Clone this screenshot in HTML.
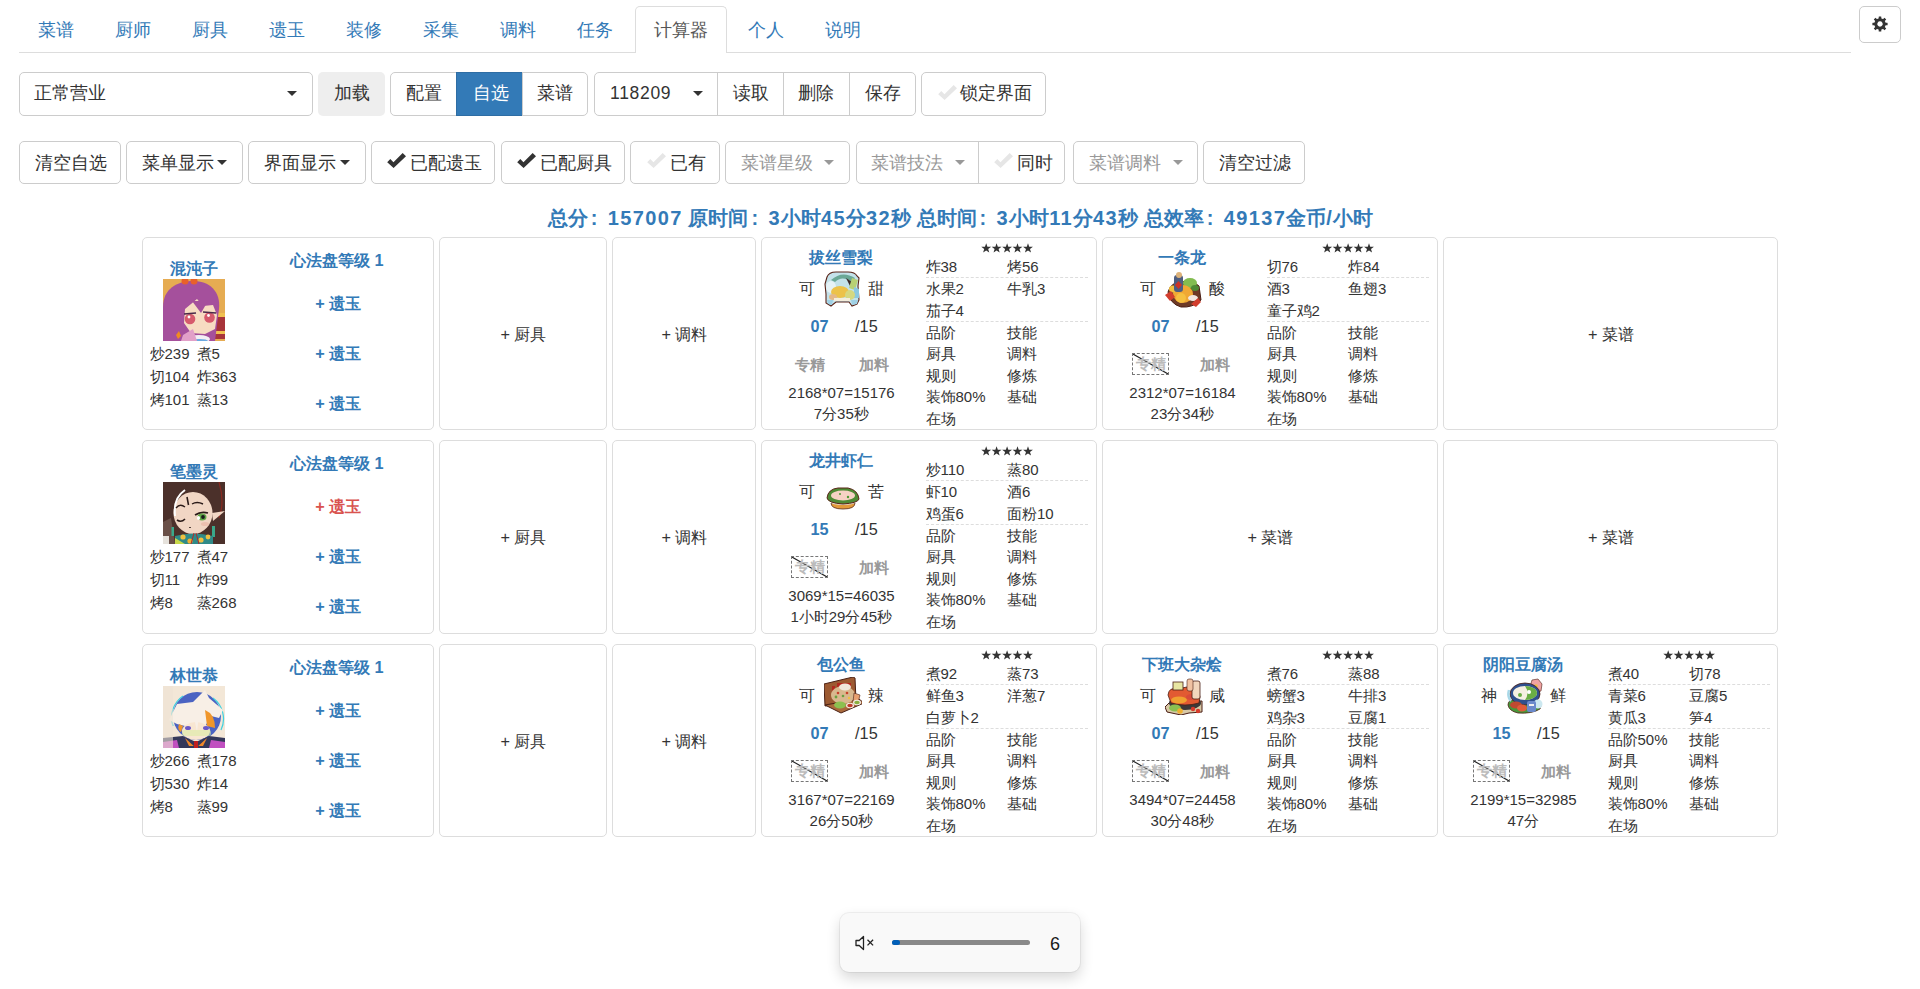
<!DOCTYPE html>
<html><head><meta charset="utf-8"><title>calc</title><style>
*{box-sizing:border-box}
html,body{margin:0;padding:0}
body{width:1920px;height:989px;overflow:hidden;position:relative;background:#fff;color:#333;font-family:"Liberation Sans",sans-serif;font-size:15px;line-height:20px}
.a{position:absolute;white-space:nowrap}
.t{position:absolute;white-space:nowrap;line-height:20px}
.bx{position:absolute;border:1px solid #ccc;border-radius:5px;background:#fff}
.nav{font-size:17.5px;color:#337ab7}
.btn{font-size:17.5px;color:#333}
.car{position:absolute;width:0;height:0;border-left:5px solid transparent;border-right:5px solid transparent;border-top:5px solid #333}
.cell{position:absolute;border:1px solid #ddd;border-radius:5px;background:#fff}
.b{font-weight:bold}
.bl{color:#337ab7}
</style></head>
<body>
<div class="a" style="left:19px;top:52px;width:1832px;height:1px;background:#ddd"></div>
<div class="a" style="left:635px;top:6px;width:92px;height:47px;border:1px solid #ddd;border-bottom:none;border-radius:5px 5px 0 0;background:#fff"></div>
<div class="t nav" style="left:37.8px;top:19.5px;color:#337ab7">菜谱</div>
<div class="t nav" style="left:114.6px;top:19.5px;color:#337ab7">厨师</div>
<div class="t nav" style="left:191.6px;top:19.5px;color:#337ab7">厨具</div>
<div class="t nav" style="left:268.6px;top:19.5px;color:#337ab7">遗玉</div>
<div class="t nav" style="left:345.6px;top:19.5px;color:#337ab7">装修</div>
<div class="t nav" style="left:422.6px;top:19.5px;color:#337ab7">采集</div>
<div class="t nav" style="left:499.6px;top:19.5px;color:#337ab7">调料</div>
<div class="t nav" style="left:576.6px;top:19.5px;color:#337ab7">任务</div>
<div class="t nav" style="left:654.0px;top:19.5px;color:#555">计算器</div>
<div class="t nav" style="left:747.8px;top:19.5px;color:#337ab7">个人</div>
<div class="t nav" style="left:825.2px;top:19.5px;color:#337ab7">说明</div>
<div class="bx" style="left:1859px;top:6px;width:42px;height:37px;"></div>
<svg class="a" style="left:1871.8px;top:16px" width="16" height="16" viewBox="0 0 16 16"><g fill="#333"><rect x="6.7" y="0.4" width="2.6" height="3.6" rx="0.4" transform="rotate(0 8 8)"/><rect x="6.7" y="0.4" width="2.6" height="3.6" rx="0.4" transform="rotate(45 8 8)"/><rect x="6.7" y="0.4" width="2.6" height="3.6" rx="0.4" transform="rotate(90 8 8)"/><rect x="6.7" y="0.4" width="2.6" height="3.6" rx="0.4" transform="rotate(135 8 8)"/><rect x="6.7" y="0.4" width="2.6" height="3.6" rx="0.4" transform="rotate(180 8 8)"/><rect x="6.7" y="0.4" width="2.6" height="3.6" rx="0.4" transform="rotate(225 8 8)"/><rect x="6.7" y="0.4" width="2.6" height="3.6" rx="0.4" transform="rotate(270 8 8)"/><rect x="6.7" y="0.4" width="2.6" height="3.6" rx="0.4" transform="rotate(315 8 8)"/></g><path fill="#333" fill-rule="evenodd" d="M8 2.3a5.7 5.7 0 1 1 -0.01 0zM8 5.3a2.7 2.7 0 1 0 0.01 0z"/></svg>
<div class="bx" style="left:19px;top:72px;width:294px;height:44px;"></div>
<div class="t btn" style="left:34.0px;top:83.0px;">正常营业</div>
<div class="car" style="left:287.0px;top:90.5px;border-top-color:#333"></div>
<div class="a" style="left:318px;top:72px;width:67px;height:44px;background:#eee;border-radius:5px"></div>
<div class="t btn" style="left:333.5px;top:83.0px;">加载</div>
<div class="bx" style="left:390px;top:72px;width:198px;height:44px;"></div>
<div class="a" style="left:456px;top:72px;width:67px;height:44px;background:#337ab7;border:1px solid #2e6da4"></div>
<div class="a" style="left:522px;top:72px;width:1px;height:44px;background:#ccc"></div>
<div class="t btn" style="left:406.0px;top:83.0px;">配置</div>
<div class="t btn" style="left:472.5px;top:83.0px;color:#fff">自选</div>
<div class="t btn" style="left:537.0px;top:83.0px;">菜谱</div>
<div class="bx" style="left:594px;top:72px;width:322px;height:44px;"></div>
<div class="a" style="left:717px;top:72px;width:1px;height:44px;background:#ccc"></div>
<div class="a" style="left:783px;top:72px;width:1px;height:44px;background:#ccc"></div>
<div class="a" style="left:849px;top:72px;width:1px;height:44px;background:#ccc"></div>
<div class="t btn" style="left:610.0px;top:83.0px;letter-spacing:0.7px">118209</div>
<div class="car" style="left:693.0px;top:90.5px;border-top-color:#333"></div>
<div class="t btn" style="left:733.0px;top:83.0px;">读取</div>
<div class="t btn" style="left:798.0px;top:83.0px;">删除</div>
<div class="t btn" style="left:864.5px;top:83.0px;">保存</div>
<div class="bx" style="left:921px;top:72px;width:125px;height:44px;"></div>
<svg class="a" style="left:937.5px;top:85.0px" width="19" height="15" viewBox="0 0 19 15"><path fill="#e6e6e6" d="M0.2 9.3 3.3 6 6.45 9.3 15.65 0 19 3.3 6.6 15z"/></svg>
<div class="t btn" style="left:959.5px;top:83.0px;">锁定界面</div>
<div class="bx" style="left:19px;top:141px;width:102px;height:43px;"></div>
<div class="t btn" style="left:34.5px;top:152.5px;">清空自选</div>
<div class="bx" style="left:126px;top:141px;width:117px;height:43px;"></div>
<div class="t btn" style="left:141.5px;top:152.5px;">菜单显示</div>
<div class="car" style="left:217.0px;top:160.0px;border-top-color:#333"></div>
<div class="bx" style="left:248px;top:141px;width:118px;height:43px;"></div>
<div class="t btn" style="left:264.0px;top:152.5px;">界面显示</div>
<div class="car" style="left:340.0px;top:160.0px;border-top-color:#333"></div>
<div class="bx" style="left:371px;top:141px;width:124px;height:43px;"></div>
<div class="t btn" style="left:409.5px;top:152.5px;">已配遗玉</div>
<svg class="a" style="left:387.0px;top:153.0px" width="19" height="15" viewBox="0 0 19 15"><path fill="#333" d="M0.2 9.3 3.3 6 6.45 9.3 15.65 0 19 3.3 6.6 15z"/></svg>
<div class="bx" style="left:501px;top:141px;width:124px;height:43px;"></div>
<div class="t btn" style="left:540.0px;top:152.5px;">已配厨具</div>
<svg class="a" style="left:517.0px;top:153.0px" width="19" height="15" viewBox="0 0 19 15"><path fill="#333" d="M0.2 9.3 3.3 6 6.45 9.3 15.65 0 19 3.3 6.6 15z"/></svg>
<div class="bx" style="left:630px;top:141px;width:90px;height:43px;"></div>
<div class="t btn" style="left:669.5px;top:152.5px;">已有</div>
<svg class="a" style="left:647.0px;top:153.0px" width="19" height="15" viewBox="0 0 19 15"><path fill="#e6e6e6" d="M0.2 9.3 3.3 6 6.45 9.3 15.65 0 19 3.3 6.6 15z"/></svg>
<div class="bx" style="left:725px;top:141px;width:125px;height:43px;"></div>
<div class="t btn" style="left:741.0px;top:152.5px;color:#999">菜谱星级</div>
<div class="car" style="left:824.0px;top:160.0px;border-top-color:#999"></div>
<div class="bx" style="left:856px;top:141px;width:209px;height:43px;"></div>
<div class="a" style="left:978px;top:141px;width:1px;height:43px;background:#ccc"></div>
<div class="t btn" style="left:871.0px;top:152.5px;color:#999">菜谱技法</div>
<div class="car" style="left:955.0px;top:160.0px;border-top-color:#999"></div>
<svg class="a" style="left:994.0px;top:153.0px" width="19" height="15" viewBox="0 0 19 15"><path fill="#e6e6e6" d="M0.2 9.3 3.3 6 6.45 9.3 15.65 0 19 3.3 6.6 15z"/></svg>
<div class="t btn" style="left:1016.5px;top:152.5px;">同时</div>
<div class="bx" style="left:1073px;top:141px;width:125px;height:43px;"></div>
<div class="t btn" style="left:1088.5px;top:152.5px;color:#999">菜谱调料</div>
<div class="car" style="left:1172.5px;top:160.0px;border-top-color:#999"></div>
<div class="bx" style="left:1203px;top:141px;width:102px;height:43px;"></div>
<div class="t btn" style="left:1218.5px;top:152.5px;">清空过滤</div>
<div class="t b" style="left:460.5px;top:208.0px;width:1000px;text-align:center;font-size:20px;color:#337ab7">总分<span style="display:inline-block;width:20px;text-align:left;padding-left:3px">:</span><span style="letter-spacing:1.4px">157007</span> 原时间<span style="display:inline-block;width:20px;text-align:left;padding-left:3px">:</span><span style="letter-spacing:1.4px">3</span>小时<span style="letter-spacing:1.4px">45</span>分<span style="letter-spacing:1.4px">32</span>秒 总时间<span style="display:inline-block;width:20px;text-align:left;padding-left:3px">:</span><span style="letter-spacing:1.4px">3</span>小时<span style="letter-spacing:1.4px">11</span>分<span style="letter-spacing:1.4px">43</span>秒 总效率<span style="display:inline-block;width:20px;text-align:left;padding-left:3px">:</span><span style="letter-spacing:1.4px">49137</span>金币<span style="letter-spacing:1.4px">/</span>小时</div>
<div class="cell" style="left:142px;top:237px;width:292px;height:193px"></div>
<div class="t b bl" style="left:133.8px;top:258.2px;width:120px;text-align:center;font-size:16.25px">混沌子</div>
<div class="a" style="left:163px;top:279px;width:62px;height:62px;overflow:hidden"><svg width="62" height="62" viewBox="0 0 62 62" style="display:block">
<rect width="62" height="62" fill="#e6ac52"/>
<rect x="52" y="34" width="10" height="26" fill="#a8343a"/><rect x="52" y="34" width="10" height="4" fill="#f0c050"/><rect x="52" y="52" width="10" height="3" fill="#f0c050"/>
<path d="M0 62V28C0 10 14 2 30 2S58 12 56 30L52 62z" fill="#a5509c"/>
<circle cx="22" cy="2" r="3.5" fill="#e8602a"/><circle cx="31" cy="2" r="3.5" fill="#e8602a"/>
<path d="M22 30L34 20L40 27L50 26L54 36L52 50L42 55L28 54L21 44z" fill="#f7dcc2"/>
<path d="M29 22L45 22L38 34z" fill="#a5509c"/>
<circle cx="27" cy="40" r="5.3" fill="#d65a6c"/><circle cx="46.5" cy="38.5" r="5.3" fill="#d65a6c"/>
<circle cx="26" cy="38" r="1.4" fill="#fff"/><circle cx="45.5" cy="36.5" r="1.4" fill="#fff"/>
<path d="M21 35L33 34" stroke="#4a2a4a" stroke-width="1.4"/><path d="M40 33L53 34" stroke="#4a2a4a" stroke-width="1.4"/>
<ellipse cx="36" cy="60" rx="11" ry="4" fill="#f4eef4"/><ellipse cx="36" cy="62" rx="9" ry="2" fill="#6aa8e0"/>
<path d="M16 52L18 57L15 60L13 56z" fill="#f08a20"/>
<path d="M20 56L30 50L34 62L18 62z" fill="#e2a0c8"/>
</svg></div>
<div class="t " style="left:149.5px;top:343.7px;font-size:15px">炒239</div>
<div class="t " style="left:196.5px;top:343.7px;font-size:15px">煮5</div>
<div class="t " style="left:149.5px;top:367.0px;font-size:15px">切104</div>
<div class="t " style="left:196.5px;top:367.0px;font-size:15px">炸363</div>
<div class="t " style="left:149.5px;top:390.3px;font-size:15px">烤101</div>
<div class="t " style="left:196.5px;top:390.3px;font-size:15px">蒸13</div>
<div class="t b bl" style="left:256.8px;top:249.7px;width:160px;text-align:center;font-size:16.25px">心法盘等级 1</div>
<div class="t b" style="left:278.3px;top:293.2px;width:120px;text-align:center;font-size:16.25px;color:#337ab7">+ 遗玉</div>
<div class="t b" style="left:278.3px;top:343.1px;width:120px;text-align:center;font-size:16.25px;color:#337ab7">+ 遗玉</div>
<div class="t b" style="left:278.3px;top:393.1px;width:120px;text-align:center;font-size:16.25px;color:#337ab7">+ 遗玉</div>
<div class="cell" style="left:439px;top:237px;width:168px;height:193px"></div><div class="t " style="left:373.5px;top:323.5px;width:300px;text-align:center;font-size:16.25px">+ 厨具</div>
<div class="cell" style="left:612px;top:237px;width:144px;height:193px"></div><div class="t " style="left:534.5px;top:323.5px;width:300px;text-align:center;font-size:16.25px">+ 调料</div>
<div class="cell" style="left:761px;top:237px;width:336px;height:193px"></div>
<div class="t b bl" style="left:761.4px;top:246.5px;width:160px;text-align:center;font-size:16.25px">拔丝雪梨</div>
<svg class="a" style="left:981.3px;top:243.3px" width="54" height="11" viewBox="0 0 54 11"><polygon transform="translate(0.0,0)" points="5.20,0.20 6.43,3.70 10.15,3.79 7.20,6.05 8.26,9.61 5.20,7.50 2.14,9.61 3.20,6.05 0.25,3.79 3.97,3.70" fill="#333"/><polygon transform="translate(10.4,0)" points="5.20,0.20 6.43,3.70 10.15,3.79 7.20,6.05 8.26,9.61 5.20,7.50 2.14,9.61 3.20,6.05 0.25,3.79 3.97,3.70" fill="#333"/><polygon transform="translate(20.9,0)" points="5.20,0.20 6.43,3.70 10.15,3.79 7.20,6.05 8.26,9.61 5.20,7.50 2.14,9.61 3.20,6.05 0.25,3.79 3.97,3.70" fill="#333"/><polygon transform="translate(31.3,0)" points="5.20,0.20 6.43,3.70 10.15,3.79 7.20,6.05 8.26,9.61 5.20,7.50 2.14,9.61 3.20,6.05 0.25,3.79 3.97,3.70" fill="#333"/><polygon transform="translate(41.8,0)" points="5.20,0.20 6.43,3.70 10.15,3.79 7.20,6.05 8.26,9.61 5.20,7.50 2.14,9.61 3.20,6.05 0.25,3.79 3.97,3.70" fill="#333"/></svg>
<div class="t " style="left:787.2px;top:277.5px;width:40px;text-align:center;font-size:16.25px">可</div>
<div class="a" style="left:823.5px;top:270.0px;width:38px;height:38px"><svg width="38" height="38" viewBox="0 0 38 38" style="display:block">
<path d="M3 7Q5 2 12 2L24 2Q31 2 33 6L35 8L34 16L35 30L33 34L28 36L25 32L12 32L7 36L2 33L2 24L1 14z" fill="#c4e2ea" stroke="#5a2418" stroke-width="1.1"/>
<path d="M7 10Q18 0 31 8L28 12Q18 5 11 12z" fill="#6aa896"/>
<path d="M22 8L28 12L26 16z" fill="#3a2a2a"/>
<ellipse cx="7" cy="17" rx="5" ry="6" fill="#e6f2f6"/>
<ellipse cx="16" cy="22" rx="9" ry="6" fill="#ecc24a"/>
<path d="M28 8L34 10L31 20L25 18z" fill="#b8d074"/>
<path d="M30 17L35 19L35 28L30 28z" fill="#8cc8e0"/>
<ellipse cx="26" cy="25" rx="5" ry="5" fill="#d6d880"/>
<ellipse cx="9" cy="27" rx="4" ry="3" fill="#e4b888"/>
<rect x="10" y="28" width="16" height="3" fill="#f4eedc"/>
<path d="M3 30L9 30L8 35L4 34z" fill="#9fd0e4"/><path d="M27 30L34 30L33 34L28 35z" fill="#9fd0e4"/>
</svg></div>
<div class="t " style="left:855.8px;top:277.5px;width:40px;text-align:center;font-size:16.25px">甜</div>
<div class="t b bl" style="left:789.5px;top:316.2px;width:60px;text-align:center;font-size:16.25px">07</div>
<div class="t " style="left:836.4px;top:316.2px;width:60px;text-align:center;font-size:16.25px">/15</div>
<div class="t b" style="left:779.6px;top:354.6px;width:60px;text-align:center;font-size:15px;color:#999">专精</div>
<div class="t b" style="left:844.2px;top:354.6px;width:60px;text-align:center;font-size:15px;color:#999">加料</div>
<div class="t " style="left:761.5px;top:382.6px;width:160px;text-align:center;font-size:15px">2168*07=15176</div>
<div class="t " style="left:761.3px;top:403.8px;width:160px;text-align:center;font-size:15px">7分35秒</div>
<div class="t " style="left:925.5px;top:256.7px;font-size:15px">炸38</div>
<div class="t " style="left:1006.9px;top:256.7px;font-size:15px">烤56</div>
<div class="t " style="left:925.5px;top:278.5px;font-size:15px">水果2</div>
<div class="t " style="left:1006.9px;top:278.5px;font-size:15px">牛乳3</div>
<div class="t " style="left:925.5px;top:300.8px;font-size:15px">茄子4</div>
<div class="t " style="left:925.5px;top:322.5px;font-size:15px">品阶</div>
<div class="t " style="left:1006.9px;top:322.5px;font-size:15px">技能</div>
<div class="t " style="left:925.5px;top:344.2px;font-size:15px">厨具</div>
<div class="t " style="left:1006.9px;top:344.2px;font-size:15px">调料</div>
<div class="t " style="left:925.5px;top:365.5px;font-size:15px">规则</div>
<div class="t " style="left:1006.9px;top:365.5px;font-size:15px">修炼</div>
<div class="t " style="left:925.5px;top:387.2px;font-size:15px">装饰80%</div>
<div class="t " style="left:1006.9px;top:387.2px;font-size:15px">基础</div>
<div class="t " style="left:925.5px;top:408.5px;font-size:15px">在场</div>
<div class="a" style="left:926px;top:277px;width:162px;height:0;border-top:1px dashed #ddd"></div>
<div class="a" style="left:926px;top:321px;width:162px;height:0;border-top:1px dashed #ddd"></div>
<div class="cell" style="left:1102px;top:237px;width:336px;height:193px"></div>
<div class="t b bl" style="left:1102.4px;top:246.5px;width:160px;text-align:center;font-size:16.25px">一条龙</div>
<svg class="a" style="left:1322.3px;top:243.3px" width="54" height="11" viewBox="0 0 54 11"><polygon transform="translate(0.0,0)" points="5.20,0.20 6.43,3.70 10.15,3.79 7.20,6.05 8.26,9.61 5.20,7.50 2.14,9.61 3.20,6.05 0.25,3.79 3.97,3.70" fill="#333"/><polygon transform="translate(10.4,0)" points="5.20,0.20 6.43,3.70 10.15,3.79 7.20,6.05 8.26,9.61 5.20,7.50 2.14,9.61 3.20,6.05 0.25,3.79 3.97,3.70" fill="#333"/><polygon transform="translate(20.9,0)" points="5.20,0.20 6.43,3.70 10.15,3.79 7.20,6.05 8.26,9.61 5.20,7.50 2.14,9.61 3.20,6.05 0.25,3.79 3.97,3.70" fill="#333"/><polygon transform="translate(31.3,0)" points="5.20,0.20 6.43,3.70 10.15,3.79 7.20,6.05 8.26,9.61 5.20,7.50 2.14,9.61 3.20,6.05 0.25,3.79 3.97,3.70" fill="#333"/><polygon transform="translate(41.8,0)" points="5.20,0.20 6.43,3.70 10.15,3.79 7.20,6.05 8.26,9.61 5.20,7.50 2.14,9.61 3.20,6.05 0.25,3.79 3.97,3.70" fill="#333"/></svg>
<div class="t " style="left:1128.2px;top:277.5px;width:40px;text-align:center;font-size:16.25px">可</div>
<div class="a" style="left:1164.5px;top:270.0px;width:38px;height:38px"><svg width="38" height="38" viewBox="0 0 38 38" style="display:block">
<path d="M3 22Q6 12 16 12L26 10L34 16L36 30Q28 38 16 37Q5 34 3 22z" fill="#6e3a26" stroke="#4a1e14" stroke-width="1"/>
<ellipse cx="25" cy="13" rx="7" ry="5" fill="#82bc50"/>
<ellipse cx="30" cy="18" rx="4" ry="3" fill="#4e8a34"/>
<ellipse cx="18" cy="24" rx="10" ry="9" fill="#f0a834"/>
<ellipse cx="16" cy="28" rx="5" ry="5" fill="#f6c040"/>
<ellipse cx="28" cy="28" rx="5" ry="3" fill="#f2e8e0"/>
<ellipse cx="8" cy="19" rx="4" ry="3.5" fill="#f2c040"/>
<rect x="9" y="5" width="9" height="17" rx="3" fill="#4d5d80"/>
<path d="M13.5 11L17 15L13.5 19L10 15z" fill="#cc3326"/>
<circle cx="14" cy="5" r="3" fill="#dcb27a"/>
<path d="M0 25L6 21L10 27L5 31z" fill="#d23e2e"/><path d="M26 34L33 28L36 32L31 37z" fill="#d23e2e"/>
</svg></div>
<div class="t " style="left:1196.8px;top:277.5px;width:40px;text-align:center;font-size:16.25px">酸</div>
<div class="t b bl" style="left:1130.5px;top:316.2px;width:60px;text-align:center;font-size:16.25px">07</div>
<div class="t " style="left:1177.4px;top:316.2px;width:60px;text-align:center;font-size:16.25px">/15</div>
<div class="a" style="left:1132.0px;top:353.0px;width:37px;height:22px;border:1px dashed #777;overflow:hidden"><svg class="a" style="left:0;top:0" width="37" height="22"><line x1="0" y1="0" x2="35" y2="20" stroke="#222" stroke-width="1.1"/></svg></div>
<div class="t b" style="left:1120.5px;top:354.0px;width:60px;text-align:center;font-size:15px;color:#bbb">专精</div>
<div class="t b" style="left:1185.2px;top:354.6px;width:60px;text-align:center;font-size:15px;color:#999">加料</div>
<div class="t " style="left:1102.5px;top:382.6px;width:160px;text-align:center;font-size:15px">2312*07=16184</div>
<div class="t " style="left:1102.3px;top:403.8px;width:160px;text-align:center;font-size:15px">23分34秒</div>
<div class="t " style="left:1266.5px;top:256.7px;font-size:15px">切76</div>
<div class="t " style="left:1347.9px;top:256.7px;font-size:15px">炸84</div>
<div class="t " style="left:1266.5px;top:278.5px;font-size:15px">酒3</div>
<div class="t " style="left:1347.9px;top:278.5px;font-size:15px">鱼翅3</div>
<div class="t " style="left:1266.5px;top:300.8px;font-size:15px">童子鸡2</div>
<div class="t " style="left:1266.5px;top:322.5px;font-size:15px">品阶</div>
<div class="t " style="left:1347.9px;top:322.5px;font-size:15px">技能</div>
<div class="t " style="left:1266.5px;top:344.2px;font-size:15px">厨具</div>
<div class="t " style="left:1347.9px;top:344.2px;font-size:15px">调料</div>
<div class="t " style="left:1266.5px;top:365.5px;font-size:15px">规则</div>
<div class="t " style="left:1347.9px;top:365.5px;font-size:15px">修炼</div>
<div class="t " style="left:1266.5px;top:387.2px;font-size:15px">装饰80%</div>
<div class="t " style="left:1347.9px;top:387.2px;font-size:15px">基础</div>
<div class="t " style="left:1266.5px;top:408.5px;font-size:15px">在场</div>
<div class="a" style="left:1267px;top:277px;width:162px;height:0;border-top:1px dashed #ddd"></div>
<div class="a" style="left:1267px;top:321px;width:162px;height:0;border-top:1px dashed #ddd"></div>
<div class="cell" style="left:1443px;top:237px;width:335px;height:193px"></div><div class="t " style="left:1461.0px;top:323.5px;width:300px;text-align:center;font-size:16.25px">+ 菜谱</div>
<div class="cell" style="left:142px;top:440px;width:292px;height:194px"></div>
<div class="t b bl" style="left:133.8px;top:461.2px;width:120px;text-align:center;font-size:16.25px">笔墨灵</div>
<div class="a" style="left:163px;top:482px;width:62px;height:62px;overflow:hidden"><svg width="62" height="62" viewBox="0 0 62 62" style="display:block">
<rect width="62" height="62" fill="#4b302a"/>
<path d="M0 40L8 36L12 62H0z" fill="#6a5048"/>
<path d="M56 0Q62 20 56 36" stroke="#8a2a20" stroke-width="1.2" fill="none"/>
<ellipse cx="30" cy="31" rx="19.5" ry="21" fill="#f1d6c4"/>
<path d="M22 8Q10 16 12 34" stroke="#fff" stroke-width="2" fill="none"/>
<path d="M49 31L62 29L50 39z" fill="#f1d6c4"/>
<path d="M13 26Q17 21 22 25" stroke="#2a1a18" stroke-width="1.4" fill="none"/>
<path d="M29 22Q34 19 40 22" stroke="#2a1a18" stroke-width="1.4" fill="none"/>
<path d="M14 38Q18 41 22 37" stroke="#2a1a18" stroke-width="1.6" fill="none"/>
<path d="M32 33Q38 29 45 31" stroke="#2a1a18" stroke-width="1.6" fill="none"/>
<ellipse cx="39" cy="35" rx="4.5" ry="3.5" fill="#62a848"/><circle cx="40" cy="35" r="1.9" fill="#1a1a1a"/><ellipse cx="35.5" cy="36" rx="1.6" ry="2" fill="#fff"/>
<path d="M24 15L25.5 23" stroke="#2a1a18" stroke-width="1.6"/>
<path d="M26 45Q27 47 28 45" stroke="#2a1a18" stroke-width=".8" fill="none"/>
<ellipse cx="42" cy="42" rx="4" ry="2" fill="#eab8a8" opacity=".7"/>
<rect x="8.5" y="45" width="2.5" height="9" fill="#3aa88a"/><rect x="49" y="44" width="3" height="11" fill="#3aa88a"/>
<path d="M12 54Q30 49 50 54L50 62H12z" fill="#2f8a88"/>
<circle cx="20" cy="55" r="2.6" fill="#f0c040"/><circle cx="27" cy="59" r="2.6" fill="#f0b030"/><circle cx="38" cy="58" r="2.6" fill="#f0c040"/><circle cx="45" cy="55" r="2.4" fill="#f0c040"/>
<path d="M31 51L28 62M33 51L36 62" stroke="#b02a2a" stroke-width="1"/>
<path d="M12 56L22 62H12z" fill="#c8d84a"/>
<rect x="0" y="54" width="6" height="8" fill="#e6e2dc"/>
</svg></div>
<div class="t " style="left:149.5px;top:546.7px;font-size:15px">炒177</div>
<div class="t " style="left:196.5px;top:546.7px;font-size:15px">煮47</div>
<div class="t " style="left:149.5px;top:570.0px;font-size:15px">切11</div>
<div class="t " style="left:196.5px;top:570.0px;font-size:15px">炸99</div>
<div class="t " style="left:149.5px;top:593.3px;font-size:15px">烤8</div>
<div class="t " style="left:196.5px;top:593.3px;font-size:15px">蒸268</div>
<div class="t b bl" style="left:256.8px;top:452.7px;width:160px;text-align:center;font-size:16.25px">心法盘等级 1</div>
<div class="t b" style="left:278.3px;top:496.2px;width:120px;text-align:center;font-size:16.25px;color:#d9534f">+ 遗玉</div>
<div class="t b" style="left:278.3px;top:546.1px;width:120px;text-align:center;font-size:16.25px;color:#337ab7">+ 遗玉</div>
<div class="t b" style="left:278.3px;top:596.0px;width:120px;text-align:center;font-size:16.25px;color:#337ab7">+ 遗玉</div>
<div class="cell" style="left:439px;top:440px;width:168px;height:194px"></div><div class="t " style="left:373.5px;top:527.0px;width:300px;text-align:center;font-size:16.25px">+ 厨具</div>
<div class="cell" style="left:612px;top:440px;width:144px;height:194px"></div><div class="t " style="left:534.5px;top:527.0px;width:300px;text-align:center;font-size:16.25px">+ 调料</div>
<div class="cell" style="left:761px;top:440px;width:336px;height:194px"></div>
<div class="t b bl" style="left:761.4px;top:449.5px;width:160px;text-align:center;font-size:16.25px">龙井虾仁</div>
<svg class="a" style="left:981.3px;top:446.3px" width="54" height="11" viewBox="0 0 54 11"><polygon transform="translate(0.0,0)" points="5.20,0.20 6.43,3.70 10.15,3.79 7.20,6.05 8.26,9.61 5.20,7.50 2.14,9.61 3.20,6.05 0.25,3.79 3.97,3.70" fill="#333"/><polygon transform="translate(10.4,0)" points="5.20,0.20 6.43,3.70 10.15,3.79 7.20,6.05 8.26,9.61 5.20,7.50 2.14,9.61 3.20,6.05 0.25,3.79 3.97,3.70" fill="#333"/><polygon transform="translate(20.9,0)" points="5.20,0.20 6.43,3.70 10.15,3.79 7.20,6.05 8.26,9.61 5.20,7.50 2.14,9.61 3.20,6.05 0.25,3.79 3.97,3.70" fill="#333"/><polygon transform="translate(31.3,0)" points="5.20,0.20 6.43,3.70 10.15,3.79 7.20,6.05 8.26,9.61 5.20,7.50 2.14,9.61 3.20,6.05 0.25,3.79 3.97,3.70" fill="#333"/><polygon transform="translate(41.8,0)" points="5.20,0.20 6.43,3.70 10.15,3.79 7.20,6.05 8.26,9.61 5.20,7.50 2.14,9.61 3.20,6.05 0.25,3.79 3.97,3.70" fill="#333"/></svg>
<div class="t " style="left:787.2px;top:480.5px;width:40px;text-align:center;font-size:16.25px">可</div>
<div class="a" style="left:823.5px;top:473.0px;width:38px;height:38px"><svg width="38" height="38" viewBox="0 0 38 38" style="display:block">
<path d="M7 30Q7 36 19 36Q31 36 31 30z" fill="#e29a3a" stroke="#5a2a1a" stroke-width=".8"/>
<ellipse cx="19" cy="29.5" rx="12" ry="2.5" fill="#e6ddd4"/>
<path d="M3 25Q4 16 14 15L24 15Q34 17 35 26Q34 30 19 31Q4 30 3 25z" fill="#4e8a34" stroke="#5a2418" stroke-width="1"/>
<ellipse cx="19" cy="22.5" rx="12" ry="5" fill="#f6d2c4"/>
<circle cx="16" cy="21" r="1" fill="#4e9a34"/><circle cx="24" cy="24" r="1.2" fill="#4e9a34"/>
</svg></div>
<div class="t " style="left:855.8px;top:480.5px;width:40px;text-align:center;font-size:16.25px">苦</div>
<div class="t b bl" style="left:789.5px;top:519.2px;width:60px;text-align:center;font-size:16.25px">15</div>
<div class="t " style="left:836.4px;top:519.2px;width:60px;text-align:center;font-size:16.25px">/15</div>
<div class="a" style="left:791.0px;top:556.0px;width:37px;height:22px;border:1px dashed #777;overflow:hidden"><svg class="a" style="left:0;top:0" width="37" height="22"><line x1="0" y1="0" x2="35" y2="20" stroke="#222" stroke-width="1.1"/></svg></div>
<div class="t b" style="left:779.5px;top:557.0px;width:60px;text-align:center;font-size:15px;color:#bbb">专精</div>
<div class="t b" style="left:844.2px;top:557.6px;width:60px;text-align:center;font-size:15px;color:#999">加料</div>
<div class="t " style="left:761.5px;top:585.6px;width:160px;text-align:center;font-size:15px">3069*15=46035</div>
<div class="t " style="left:761.3px;top:606.8px;width:160px;text-align:center;font-size:15px">1小时29分45秒</div>
<div class="t " style="left:925.5px;top:459.7px;font-size:15px">炒110</div>
<div class="t " style="left:1006.9px;top:459.7px;font-size:15px">蒸80</div>
<div class="t " style="left:925.5px;top:481.5px;font-size:15px">虾10</div>
<div class="t " style="left:1006.9px;top:481.5px;font-size:15px">酒6</div>
<div class="t " style="left:925.5px;top:503.8px;font-size:15px">鸡蛋6</div>
<div class="t " style="left:1006.9px;top:503.8px;font-size:15px">面粉10</div>
<div class="t " style="left:925.5px;top:525.5px;font-size:15px">品阶</div>
<div class="t " style="left:1006.9px;top:525.5px;font-size:15px">技能</div>
<div class="t " style="left:925.5px;top:547.2px;font-size:15px">厨具</div>
<div class="t " style="left:1006.9px;top:547.2px;font-size:15px">调料</div>
<div class="t " style="left:925.5px;top:568.5px;font-size:15px">规则</div>
<div class="t " style="left:1006.9px;top:568.5px;font-size:15px">修炼</div>
<div class="t " style="left:925.5px;top:590.2px;font-size:15px">装饰80%</div>
<div class="t " style="left:1006.9px;top:590.2px;font-size:15px">基础</div>
<div class="t " style="left:925.5px;top:611.5px;font-size:15px">在场</div>
<div class="a" style="left:926px;top:480px;width:162px;height:0;border-top:1px dashed #ddd"></div>
<div class="a" style="left:926px;top:524px;width:162px;height:0;border-top:1px dashed #ddd"></div>
<div class="cell" style="left:1102px;top:440px;width:336px;height:194px"></div><div class="t " style="left:1120.5px;top:527.0px;width:300px;text-align:center;font-size:16.25px">+ 菜谱</div>
<div class="cell" style="left:1443px;top:440px;width:335px;height:194px"></div><div class="t " style="left:1461.0px;top:527.0px;width:300px;text-align:center;font-size:16.25px">+ 菜谱</div>
<div class="cell" style="left:142px;top:644px;width:292px;height:193px"></div>
<div class="t b bl" style="left:133.8px;top:665.2px;width:120px;text-align:center;font-size:16.25px">林世恭</div>
<div class="a" style="left:163px;top:686px;width:62px;height:62px;overflow:hidden"><svg width="62" height="62" viewBox="0 0 62 62" style="display:block">
<rect width="62" height="62" fill="#f3e7d7"/>
<circle cx="34" cy="30" r="24" fill="#4b63c2"/>
<path d="M10 40A26 26 0 0 1 20 10" stroke="#3fd0e0" stroke-width="1.2" fill="none"/>
<path d="M58 44A26 26 0 0 0 50 12" stroke="#3fd0e0" stroke-width="1.2" fill="none"/>
<path d="M6 34L14 18L30 16L42 4L46 12L60 24L56 32L48 30L40 44L30 44L22 40L14 38z" fill="#f8efe6"/>
<path d="M42 24Q52 28 52 42L44 40z" fill="#f0962a"/><path d="M16 38Q14 44 18 46L20 40z" fill="#f0962a"/>
<ellipse cx="33" cy="45" rx="14" ry="9" fill="#f8e6d2"/>
<path d="M30 26L36 28L34 46z" fill="#f8efe6"/>
<ellipse cx="25" cy="42" rx="3" ry="2" fill="#6a58c8"/><ellipse cx="43" cy="42" rx="3" ry="2" fill="#6a58c8"/>
<rect x="19" y="44" width="29" height="6" rx="2" fill="#d8eca0" opacity=".55"/>
<path d="M0 52L20 50L33 56L46 50L62 52V62H0z" fill="#34385a"/>
<path d="M0 56L14 54L16 62H0z" fill="#c050c0"/><path d="M62 56L48 54L46 62H62z" fill="#c050c0"/>
<path d="M22 52L33 62L44 52L40 60L26 60z" fill="#f0882a"/>
<rect x="31" y="55" width="4" height="7" fill="#c02020"/>
<rect x="0" y="0" width="10" height="62" fill="#efe3d3" opacity=".6"/>
</svg></div>
<div class="t " style="left:149.5px;top:750.7px;font-size:15px">炒266</div>
<div class="t " style="left:196.5px;top:750.7px;font-size:15px">煮178</div>
<div class="t " style="left:149.5px;top:774.0px;font-size:15px">切530</div>
<div class="t " style="left:196.5px;top:774.0px;font-size:15px">炸14</div>
<div class="t " style="left:149.5px;top:797.3px;font-size:15px">烤8</div>
<div class="t " style="left:196.5px;top:797.3px;font-size:15px">蒸99</div>
<div class="t b bl" style="left:256.8px;top:656.7px;width:160px;text-align:center;font-size:16.25px">心法盘等级 1</div>
<div class="t b" style="left:278.3px;top:700.2px;width:120px;text-align:center;font-size:16.25px;color:#337ab7">+ 遗玉</div>
<div class="t b" style="left:278.3px;top:750.1px;width:120px;text-align:center;font-size:16.25px;color:#337ab7">+ 遗玉</div>
<div class="t b" style="left:278.3px;top:800.0px;width:120px;text-align:center;font-size:16.25px;color:#337ab7">+ 遗玉</div>
<div class="cell" style="left:439px;top:644px;width:168px;height:193px"></div><div class="t " style="left:373.5px;top:730.5px;width:300px;text-align:center;font-size:16.25px">+ 厨具</div>
<div class="cell" style="left:612px;top:644px;width:144px;height:193px"></div><div class="t " style="left:534.5px;top:730.5px;width:300px;text-align:center;font-size:16.25px">+ 调料</div>
<div class="cell" style="left:761px;top:644px;width:336px;height:193px"></div>
<div class="t b bl" style="left:761.4px;top:653.5px;width:160px;text-align:center;font-size:16.25px">包公鱼</div>
<svg class="a" style="left:981.3px;top:650.3px" width="54" height="11" viewBox="0 0 54 11"><polygon transform="translate(0.0,0)" points="5.20,0.20 6.43,3.70 10.15,3.79 7.20,6.05 8.26,9.61 5.20,7.50 2.14,9.61 3.20,6.05 0.25,3.79 3.97,3.70" fill="#333"/><polygon transform="translate(10.4,0)" points="5.20,0.20 6.43,3.70 10.15,3.79 7.20,6.05 8.26,9.61 5.20,7.50 2.14,9.61 3.20,6.05 0.25,3.79 3.97,3.70" fill="#333"/><polygon transform="translate(20.9,0)" points="5.20,0.20 6.43,3.70 10.15,3.79 7.20,6.05 8.26,9.61 5.20,7.50 2.14,9.61 3.20,6.05 0.25,3.79 3.97,3.70" fill="#333"/><polygon transform="translate(31.3,0)" points="5.20,0.20 6.43,3.70 10.15,3.79 7.20,6.05 8.26,9.61 5.20,7.50 2.14,9.61 3.20,6.05 0.25,3.79 3.97,3.70" fill="#333"/><polygon transform="translate(41.8,0)" points="5.20,0.20 6.43,3.70 10.15,3.79 7.20,6.05 8.26,9.61 5.20,7.50 2.14,9.61 3.20,6.05 0.25,3.79 3.97,3.70" fill="#333"/></svg>
<div class="t " style="left:787.2px;top:684.5px;width:40px;text-align:center;font-size:16.25px">可</div>
<div class="a" style="left:823.5px;top:677.0px;width:38px;height:38px"><svg width="38" height="38" viewBox="0 0 38 38" style="display:block">
<path d="M0 7L29 0L31 1L32 24L1 29z" fill="#9c5a32" stroke="#4a2014" stroke-width="1"/>
<path d="M1 28L35 22L40 26L17 36z" fill="#a96a3c" stroke="#4a2014" stroke-width="1"/>
<rect x="8" y="9" width="3" height="7" fill="#b2281e"/><rect x="13" y="6" width="14" height="4" fill="#b2281e"/>
<ellipse cx="19" cy="18" rx="12" ry="9" fill="#d8b88e"/>
<circle cx="14" cy="16" r="1.3" fill="#c8402a"/><circle cx="19" cy="19" r="1.3" fill="#6aa040"/><circle cx="23" cy="16" r="1.3" fill="#c8402a"/><circle cx="12" cy="20" r="1.4" fill="#6aa040"/><circle cx="25" cy="21" r="1.2" fill="#f0c040"/>
<ellipse cx="21" cy="10" rx="6" ry="3.5" fill="#f0e8dc"/>
<path d="M30 16L36 18L34 26L29 25z" fill="#e8a070" stroke="#4a2014" stroke-width=".6"/>
<ellipse cx="16" cy="28" rx="6" ry="3.5" fill="#8cc050"/>
<ellipse cx="26" cy="28.5" rx="4" ry="2.8" fill="#f4ece4"/><ellipse cx="26" cy="28.5" rx="2.8" ry="1.8" fill="#c03a2a"/>
<ellipse cx="33" cy="25.5" rx="4" ry="2.8" fill="#f4ece4"/><ellipse cx="33" cy="25.5" rx="2.8" ry="1.7" fill="#8ab040"/>
</svg></div>
<div class="t " style="left:855.8px;top:684.5px;width:40px;text-align:center;font-size:16.25px">辣</div>
<div class="t b bl" style="left:789.5px;top:723.2px;width:60px;text-align:center;font-size:16.25px">07</div>
<div class="t " style="left:836.4px;top:723.2px;width:60px;text-align:center;font-size:16.25px">/15</div>
<div class="a" style="left:791.0px;top:760.0px;width:37px;height:22px;border:1px dashed #777;overflow:hidden"><svg class="a" style="left:0;top:0" width="37" height="22"><line x1="0" y1="0" x2="35" y2="20" stroke="#222" stroke-width="1.1"/></svg></div>
<div class="t b" style="left:779.5px;top:761.0px;width:60px;text-align:center;font-size:15px;color:#bbb">专精</div>
<div class="t b" style="left:844.2px;top:761.6px;width:60px;text-align:center;font-size:15px;color:#999">加料</div>
<div class="t " style="left:761.5px;top:789.6px;width:160px;text-align:center;font-size:15px">3167*07=22169</div>
<div class="t " style="left:761.3px;top:810.8px;width:160px;text-align:center;font-size:15px">26分50秒</div>
<div class="t " style="left:925.5px;top:663.7px;font-size:15px">煮92</div>
<div class="t " style="left:1006.9px;top:663.7px;font-size:15px">蒸73</div>
<div class="t " style="left:925.5px;top:685.5px;font-size:15px">鲜鱼3</div>
<div class="t " style="left:1006.9px;top:685.5px;font-size:15px">洋葱7</div>
<div class="t " style="left:925.5px;top:707.8px;font-size:15px">白萝卜2</div>
<div class="t " style="left:925.5px;top:729.5px;font-size:15px">品阶</div>
<div class="t " style="left:1006.9px;top:729.5px;font-size:15px">技能</div>
<div class="t " style="left:925.5px;top:751.2px;font-size:15px">厨具</div>
<div class="t " style="left:1006.9px;top:751.2px;font-size:15px">调料</div>
<div class="t " style="left:925.5px;top:772.5px;font-size:15px">规则</div>
<div class="t " style="left:1006.9px;top:772.5px;font-size:15px">修炼</div>
<div class="t " style="left:925.5px;top:794.2px;font-size:15px">装饰80%</div>
<div class="t " style="left:1006.9px;top:794.2px;font-size:15px">基础</div>
<div class="t " style="left:925.5px;top:815.5px;font-size:15px">在场</div>
<div class="a" style="left:926px;top:684px;width:162px;height:0;border-top:1px dashed #ddd"></div>
<div class="a" style="left:926px;top:728px;width:162px;height:0;border-top:1px dashed #ddd"></div>
<div class="cell" style="left:1102px;top:644px;width:336px;height:193px"></div>
<div class="t b bl" style="left:1102.4px;top:653.5px;width:160px;text-align:center;font-size:16.25px">下班大杂烩</div>
<svg class="a" style="left:1322.3px;top:650.3px" width="54" height="11" viewBox="0 0 54 11"><polygon transform="translate(0.0,0)" points="5.20,0.20 6.43,3.70 10.15,3.79 7.20,6.05 8.26,9.61 5.20,7.50 2.14,9.61 3.20,6.05 0.25,3.79 3.97,3.70" fill="#333"/><polygon transform="translate(10.4,0)" points="5.20,0.20 6.43,3.70 10.15,3.79 7.20,6.05 8.26,9.61 5.20,7.50 2.14,9.61 3.20,6.05 0.25,3.79 3.97,3.70" fill="#333"/><polygon transform="translate(20.9,0)" points="5.20,0.20 6.43,3.70 10.15,3.79 7.20,6.05 8.26,9.61 5.20,7.50 2.14,9.61 3.20,6.05 0.25,3.79 3.97,3.70" fill="#333"/><polygon transform="translate(31.3,0)" points="5.20,0.20 6.43,3.70 10.15,3.79 7.20,6.05 8.26,9.61 5.20,7.50 2.14,9.61 3.20,6.05 0.25,3.79 3.97,3.70" fill="#333"/><polygon transform="translate(41.8,0)" points="5.20,0.20 6.43,3.70 10.15,3.79 7.20,6.05 8.26,9.61 5.20,7.50 2.14,9.61 3.20,6.05 0.25,3.79 3.97,3.70" fill="#333"/></svg>
<div class="t " style="left:1128.2px;top:684.5px;width:40px;text-align:center;font-size:16.25px">可</div>
<div class="a" style="left:1164.5px;top:677.0px;width:38px;height:38px"><svg width="38" height="38" viewBox="0 0 38 38" style="display:block">
<path d="M0 30L4 26L37 24L37 35L24 36L16 38L2 35z" fill="#d8c8a6" stroke="#4a1e14" stroke-width="1"/>
<ellipse cx="20" cy="26" rx="16" ry="7" fill="#3c3838"/>
<path d="M3 18Q4 10 12 12L22 10Q34 10 35 20L34 26Q20 30 6 26z" fill="#e25a32" stroke="#4a1e14" stroke-width=".8"/>
<ellipse cx="14" cy="23" rx="8" ry="3.5" fill="#f0a030"/>
<ellipse cx="26" cy="20" rx="5" ry="3" fill="#d84a3a"/>
<rect x="27" y="4" width="8" height="18" rx="2" fill="#f2d6bc" stroke="#4a1e14" stroke-width=".8"/>
<rect x="22" y="2" width="6" height="12" rx="2" fill="#f0c2a2" stroke="#4a1e14" stroke-width=".6"/>
<rect x="8" y="5" width="10" height="8" fill="#e8e6a2" stroke="#4a1e14" stroke-width=".8"/>
<ellipse cx="10" cy="31" rx="6" ry="3.5" fill="#8ac050"/><circle cx="15" cy="34" r="2.8" fill="#f0b030"/>
<circle cx="28" cy="32" r="2.2" fill="#d83a2a"/><circle cx="33" cy="34" r="2.2" fill="#d83a2a"/>
</svg></div>
<div class="t " style="left:1196.8px;top:684.5px;width:40px;text-align:center;font-size:16.25px">咸</div>
<div class="t b bl" style="left:1130.5px;top:723.2px;width:60px;text-align:center;font-size:16.25px">07</div>
<div class="t " style="left:1177.4px;top:723.2px;width:60px;text-align:center;font-size:16.25px">/15</div>
<div class="a" style="left:1132.0px;top:760.0px;width:37px;height:22px;border:1px dashed #777;overflow:hidden"><svg class="a" style="left:0;top:0" width="37" height="22"><line x1="0" y1="0" x2="35" y2="20" stroke="#222" stroke-width="1.1"/></svg></div>
<div class="t b" style="left:1120.5px;top:761.0px;width:60px;text-align:center;font-size:15px;color:#bbb">专精</div>
<div class="t b" style="left:1185.2px;top:761.6px;width:60px;text-align:center;font-size:15px;color:#999">加料</div>
<div class="t " style="left:1102.5px;top:789.6px;width:160px;text-align:center;font-size:15px">3494*07=24458</div>
<div class="t " style="left:1102.3px;top:810.8px;width:160px;text-align:center;font-size:15px">30分48秒</div>
<div class="t " style="left:1266.5px;top:663.7px;font-size:15px">煮76</div>
<div class="t " style="left:1347.9px;top:663.7px;font-size:15px">蒸88</div>
<div class="t " style="left:1266.5px;top:685.5px;font-size:15px">螃蟹3</div>
<div class="t " style="left:1347.9px;top:685.5px;font-size:15px">牛排3</div>
<div class="t " style="left:1266.5px;top:707.8px;font-size:15px">鸡杂3</div>
<div class="t " style="left:1347.9px;top:707.8px;font-size:15px">豆腐1</div>
<div class="t " style="left:1266.5px;top:729.5px;font-size:15px">品阶</div>
<div class="t " style="left:1347.9px;top:729.5px;font-size:15px">技能</div>
<div class="t " style="left:1266.5px;top:751.2px;font-size:15px">厨具</div>
<div class="t " style="left:1347.9px;top:751.2px;font-size:15px">调料</div>
<div class="t " style="left:1266.5px;top:772.5px;font-size:15px">规则</div>
<div class="t " style="left:1347.9px;top:772.5px;font-size:15px">修炼</div>
<div class="t " style="left:1266.5px;top:794.2px;font-size:15px">装饰80%</div>
<div class="t " style="left:1347.9px;top:794.2px;font-size:15px">基础</div>
<div class="t " style="left:1266.5px;top:815.5px;font-size:15px">在场</div>
<div class="a" style="left:1267px;top:684px;width:162px;height:0;border-top:1px dashed #ddd"></div>
<div class="a" style="left:1267px;top:728px;width:162px;height:0;border-top:1px dashed #ddd"></div>
<div class="cell" style="left:1443px;top:644px;width:335px;height:193px"></div>
<div class="t b bl" style="left:1443.4px;top:653.5px;width:160px;text-align:center;font-size:16.25px">阴阳豆腐汤</div>
<svg class="a" style="left:1663.3px;top:650.3px" width="54" height="11" viewBox="0 0 54 11"><polygon transform="translate(0.0,0)" points="5.20,0.20 6.43,3.70 10.15,3.79 7.20,6.05 8.26,9.61 5.20,7.50 2.14,9.61 3.20,6.05 0.25,3.79 3.97,3.70" fill="#333"/><polygon transform="translate(10.4,0)" points="5.20,0.20 6.43,3.70 10.15,3.79 7.20,6.05 8.26,9.61 5.20,7.50 2.14,9.61 3.20,6.05 0.25,3.79 3.97,3.70" fill="#333"/><polygon transform="translate(20.9,0)" points="5.20,0.20 6.43,3.70 10.15,3.79 7.20,6.05 8.26,9.61 5.20,7.50 2.14,9.61 3.20,6.05 0.25,3.79 3.97,3.70" fill="#333"/><polygon transform="translate(31.3,0)" points="5.20,0.20 6.43,3.70 10.15,3.79 7.20,6.05 8.26,9.61 5.20,7.50 2.14,9.61 3.20,6.05 0.25,3.79 3.97,3.70" fill="#333"/><polygon transform="translate(41.8,0)" points="5.20,0.20 6.43,3.70 10.15,3.79 7.20,6.05 8.26,9.61 5.20,7.50 2.14,9.61 3.20,6.05 0.25,3.79 3.97,3.70" fill="#333"/></svg>
<div class="t " style="left:1469.2px;top:684.5px;width:40px;text-align:center;font-size:16.25px">神</div>
<div class="a" style="left:1505.5px;top:677.0px;width:38px;height:38px"><svg width="38" height="38" viewBox="0 0 38 38" style="display:block">
<path d="M2 28Q2 22 10 23L30 23Q37 25 34 32Q26 37 12 36Q3 34 2 28z" fill="#48983a" stroke="#4a1e14" stroke-width=".8"/>
<path d="M26 3L32 2L36 7L35 14L29 16L24 10z" fill="#f0a2a2" stroke="#4a1e14" stroke-width=".6"/><circle cx="30" cy="9" r="1.8" fill="#f0c040"/>
<ellipse cx="19" cy="17" rx="15" ry="11" fill="#2f508e" stroke="#4a1e14" stroke-width=".8"/>
<ellipse cx="19" cy="16" rx="12" ry="7" fill="#f6f0e2"/>
<path d="M19 9A12 7 0 0 1 31 16A12 7 0 0 1 19 23Q24 16 19 9z" fill="#6aae44"/>
<circle cx="23" cy="15" r="2" fill="#fff"/><circle cx="14" cy="18" r="2" fill="#6aae44"/>
<ellipse cx="10" cy="28" rx="6" ry="3.5" fill="#c04a30"/><ellipse cx="16" cy="31" rx="5" ry="3.5" fill="#e05a3a"/>
<circle cx="32" cy="27" r="4.5" fill="#cce8f0"/>
<rect x="21" y="24" width="9" height="11" rx="2" fill="#6b8acb"/><rect x="23" y="27" width="5" height="2" fill="#f0f0f0"/>
<path d="M3 13Q1 20 5 24" stroke="#a8d8e8" stroke-width="2.5" fill="none"/>
</svg></div>
<div class="t " style="left:1537.8px;top:684.5px;width:40px;text-align:center;font-size:16.25px">鲜</div>
<div class="t b bl" style="left:1471.5px;top:723.2px;width:60px;text-align:center;font-size:16.25px">15</div>
<div class="t " style="left:1518.4px;top:723.2px;width:60px;text-align:center;font-size:16.25px">/15</div>
<div class="a" style="left:1473.0px;top:760.0px;width:37px;height:22px;border:1px dashed #777;overflow:hidden"><svg class="a" style="left:0;top:0" width="37" height="22"><line x1="0" y1="0" x2="35" y2="20" stroke="#222" stroke-width="1.1"/></svg></div>
<div class="t b" style="left:1461.5px;top:761.0px;width:60px;text-align:center;font-size:15px;color:#bbb">专精</div>
<div class="t b" style="left:1526.2px;top:761.6px;width:60px;text-align:center;font-size:15px;color:#999">加料</div>
<div class="t " style="left:1443.5px;top:789.6px;width:160px;text-align:center;font-size:15px">2199*15=32985</div>
<div class="t " style="left:1443.3px;top:810.8px;width:160px;text-align:center;font-size:15px">47分</div>
<div class="t " style="left:1607.5px;top:663.7px;font-size:15px">煮40</div>
<div class="t " style="left:1688.9px;top:663.7px;font-size:15px">切78</div>
<div class="t " style="left:1607.5px;top:685.5px;font-size:15px">青菜6</div>
<div class="t " style="left:1688.9px;top:685.5px;font-size:15px">豆腐5</div>
<div class="t " style="left:1607.5px;top:707.8px;font-size:15px">黄瓜3</div>
<div class="t " style="left:1688.9px;top:707.8px;font-size:15px">笋4</div>
<div class="t " style="left:1607.5px;top:729.5px;font-size:15px">品阶50%</div>
<div class="t " style="left:1688.9px;top:729.5px;font-size:15px">技能</div>
<div class="t " style="left:1607.5px;top:751.2px;font-size:15px">厨具</div>
<div class="t " style="left:1688.9px;top:751.2px;font-size:15px">调料</div>
<div class="t " style="left:1607.5px;top:772.5px;font-size:15px">规则</div>
<div class="t " style="left:1688.9px;top:772.5px;font-size:15px">修炼</div>
<div class="t " style="left:1607.5px;top:794.2px;font-size:15px">装饰80%</div>
<div class="t " style="left:1688.9px;top:794.2px;font-size:15px">基础</div>
<div class="t " style="left:1607.5px;top:815.5px;font-size:15px">在场</div>
<div class="a" style="left:1608px;top:684px;width:162px;height:0;border-top:1px dashed #ddd"></div>
<div class="a" style="left:1608px;top:728px;width:162px;height:0;border-top:1px dashed #ddd"></div>

<div class="a" style="left:840px;top:913px;width:240px;height:59px;border-radius:9px;background:#f9f9f9;box-shadow:0 6px 14px rgba(0,0,0,.16),0 0 0 1px rgba(0,0,0,.05)"></div>
<svg class="a" style="left:854px;top:935px" width="24" height="16" viewBox="0 0 24 16"><path d="M2 5.5h3.2L9.5 1.5v13L5.2 10.5H2z" fill="none" stroke="#222" stroke-width="1.3" stroke-linejoin="round"/><path d="M13.5 4.8l5.6 5.6M19.1 4.8l-5.6 5.6" stroke="#222" stroke-width="1.3"/></svg>
<div class="a" style="left:892px;top:940px;width:138px;height:5px;border-radius:3px;background:#898989"></div>
<div class="a" style="left:892px;top:940px;width:8px;height:5px;border-radius:3px;background:#005fb8"></div>
<div class="t" style="left:1050px;top:934px;font-size:18px;color:#1a1a1a">6</div>

</body></html>
